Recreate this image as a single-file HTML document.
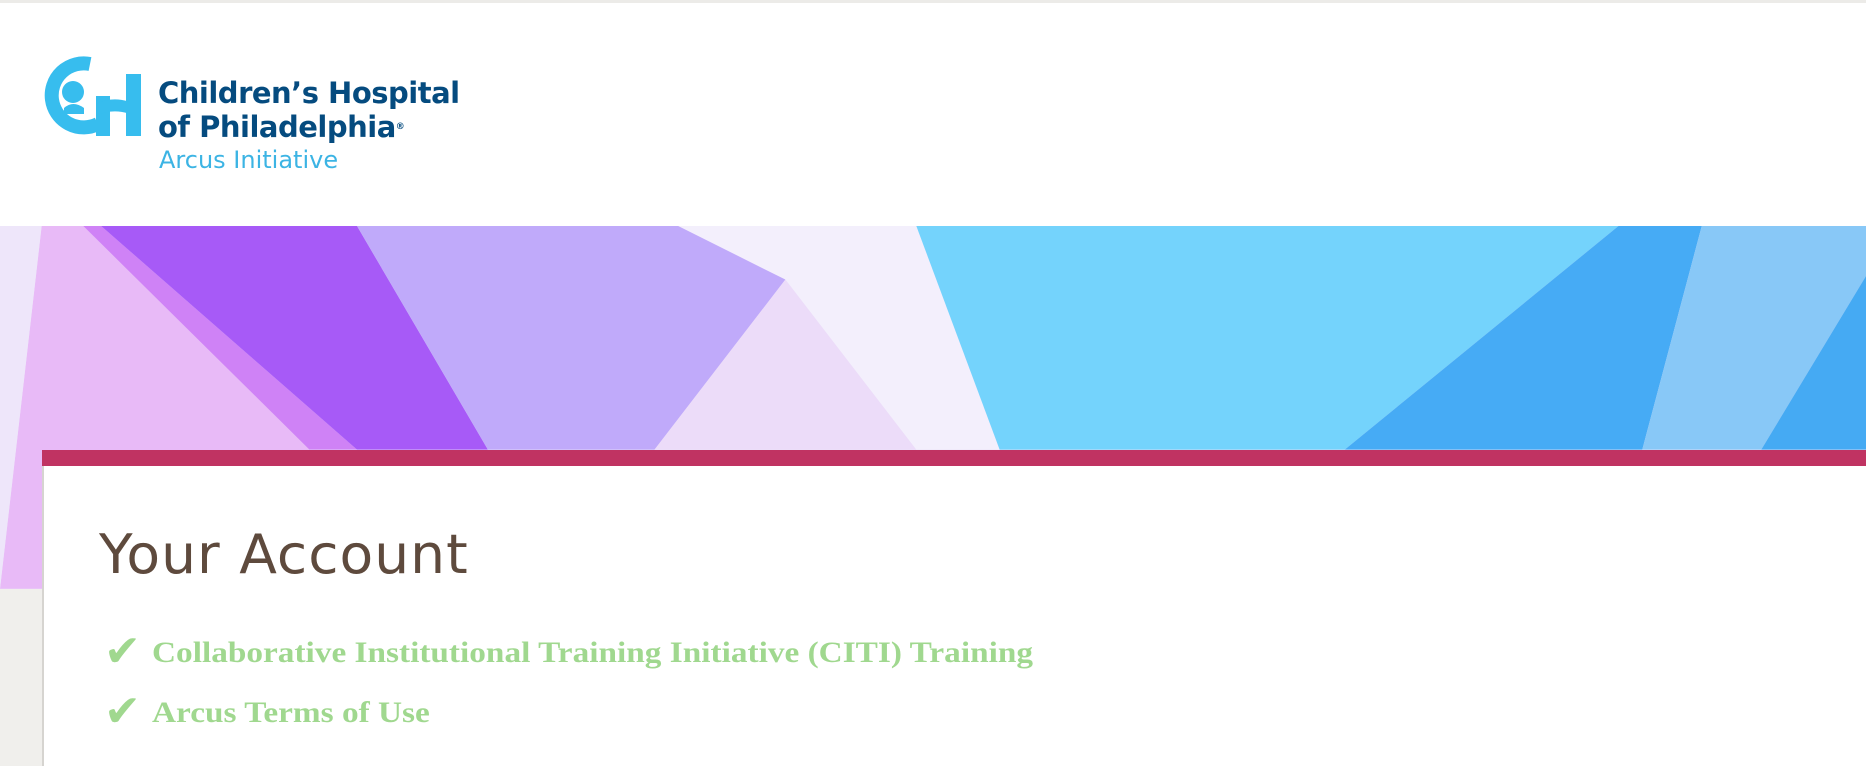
<!DOCTYPE html>
<html><head><meta charset="utf-8"><style>
html,body{margin:0;padding:0;width:1866px;height:766px;overflow:hidden;background:#fff;font-family:"Liberation Sans",sans-serif}
.topline{position:absolute;left:0;top:0;width:1866px;height:3px;background:#ecebe8}
.banner{position:absolute;left:0;top:226px;width:1866px;height:540px}
.side{position:absolute;left:0;top:589px;width:42px;height:177px;background:#f0efec}
.bar{position:absolute;left:42px;top:450px;width:1824px;height:16px;background:#c03362}
.card{position:absolute;left:42px;top:466px;width:1824px;height:300px;background:#fff;border-left:2px solid #d6d4d0}
h1{position:absolute;left:99px;top:523px;margin:0;font:400 54px "DejaVu Sans","Liberation Sans",sans-serif;color:#5e4a3d;letter-spacing:1px;transform:scaleX(1.02);transform-origin:left}
.item{position:absolute;left:104px;font:bold 30px "Liberation Serif",serif;color:#a0d88f;white-space:nowrap}
.item .ck{font-size:44px;position:absolute;left:0;top:-10px;font-family:"DejaVu Sans",sans-serif}
.item .t{position:absolute;left:48px;top:0;transform:scaleX(1.11);transform-origin:left}
</style></head><body>
<div class="topline"></div>
<svg style="position:absolute;left:40px;top:56px" width="106" height="84" viewBox="0 0 106 84">
<path d="M50 8 A32 32 0 1 0 58 68" fill="none" stroke="#37bdee" stroke-width="14"/>
<circle cx="33" cy="36" r="11" fill="#37bdee"/>
<path d="M24 52 Q33 44 44 52 L44 58 L24 58Z" fill="#37bdee"/>
<rect x="56" y="40" width="14" height="40" fill="#37bdee"/>
<rect x="86" y="18" width="15" height="62" fill="#37bdee"/>
<path d="M56 48 Q72 40 90 46 L90 58 Q72 52 56 60Z" fill="#37bdee"/>
</svg>
<div style="position:absolute;left:158px;top:76px;font:bold 29px 'DejaVu Sans',sans-serif;color:#054b7f;line-height:34px;letter-spacing:-0.5px">Children’s Hospital<br>of Philadelphia<span style="font-size:9px;vertical-align:top">®</span></div>
<div style="position:absolute;left:159px;top:146px;font:24px 'DejaVu Sans',sans-serif;color:#3cb4e4">Arcus Initiative</div>
<svg class="banner" viewBox="0 190 1568 454" preserveAspectRatio="none">
<rect x="0" y="190" width="1568" height="454" fill="#ece2f8"/>
<polygon points="35,190 70,190 260,378 260,495 0,495" fill="#e8baf7"/>
<polygon points="0,190 35,190 0,495" fill="#eee6fa"/>
<polygon points="70,190 85,190 300,378 260,378" fill="#cf82f6"/>
<polygon points="85,190 300,190 410,378 300,378" fill="#a75af7"/>
<polygon points="300,190 570,190 660,235 550,378 410,378" fill="#c0aafa"/>
<polygon points="550,378 660,235 770,378" fill="#ecdcf9"/>
<polygon points="570,190 770,190 840,378 770,378 660,235" fill="#f3effc"/>
<polygon points="770,190 1360,190 1130,378 840,378" fill="#74d3fc"/>
<polygon points="1360,190 1430,190 1380,378 1130,378" fill="#46abf5"/>
<polygon points="1430,190 1568,190 1568,232 1480,378 1380,378" fill="#88c8f7"/>
<polygon points="1568,232 1568,378 1480,378" fill="#45aaf3"/>
</svg>
<div class="side"></div>
<div class="bar"></div>
<div class="card"></div>
<h1>Your Account</h1>
<div class="item" style="top:636px"><span class="ck">✔</span><span class="t">Collaborative Institutional Training Initiative (CITI) Training</span></div>
<div class="item" style="top:696px"><span class="ck">✔</span><span class="t">Arcus Terms of Use</span></div>
</body></html>
